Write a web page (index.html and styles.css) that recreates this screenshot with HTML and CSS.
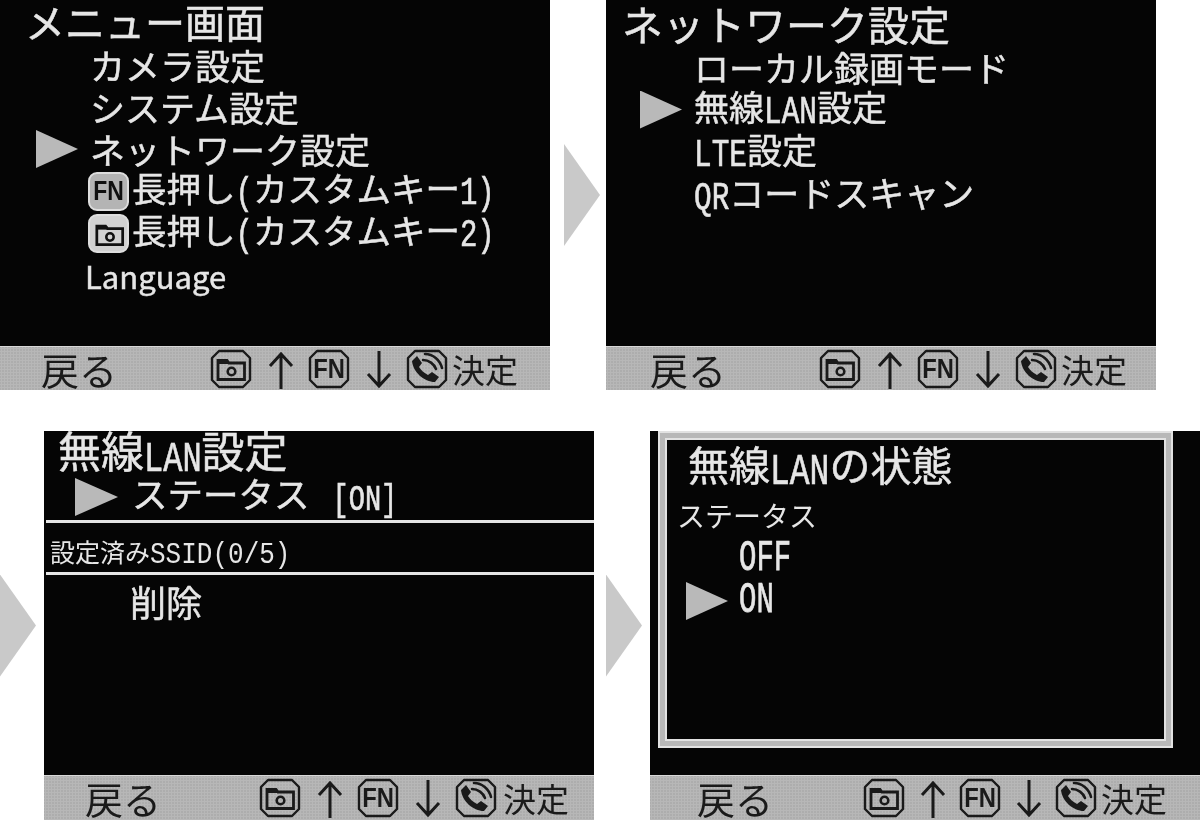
FILE: index.html
```html
<!DOCTYPE html>
<html lang="ja">
<head>
    <meta charset="utf-8">
    <title>無線LAN設定の手順</title>
    <link rel="stylesheet" href="styles.css">
</head>
<body>
    <svg class="defs" aria-hidden="true">
        <symbol id="cap" viewBox="0 0 42 40">
            <path d="M9 2H33L40 9V31L33 38H9L2 31V9Z" fill="none" stroke="currentColor" stroke-width="2.4" stroke-linejoin="round"/>
        </symbol>
        <symbol id="folder" viewBox="0 0 42 40">
            <path d="M8 11.5H17L19 14H34.5V30.5H8Z" fill="none" stroke="currentColor" stroke-width="2.8"/>
            <path d="M8 12H19V15H8Z" fill="currentColor"/>
            <circle cx="21.5" cy="22.5" r="3.8" fill="none" stroke="currentColor" stroke-width="2.6"/>
        </symbol>
        <symbol id="phone" viewBox="0 0 42 40">
            <path d="M6 12L11 7L16 14L13 18C15 21 18 24 22 26L26 23L33 28L29 33C18 33 7 23 6 12Z" fill="currentColor"/>
            <path d="M17 11C23 11 28 15 30 20M19 5C27 5 34 11 36 19" fill="none" stroke="currentColor" stroke-width="2.6" stroke-linecap="round"/>
        </symbol>
        <symbol id="up" viewBox="0 0 26 40">
            <path d="M13 40V6M2 17L13 5L24 17" fill="none" stroke="currentColor" stroke-width="3"/>
        </symbol>
        <symbol id="down" viewBox="0 0 26 40">
            <path d="M13 2V36M2 25L13 37L24 25" fill="none" stroke="currentColor" stroke-width="3"/>
        </symbol>
    </svg>

    <div class="stage">
        <div class="strip strip-top">
            <section class="screen screen-menu">
                <div class="content">
                    <h1 class="title">メニュー画面</h1>
                    <div class="row"><span class="pointer"></span><span>カメラ設定</span></div>
                    <div class="row"><span class="pointer"></span><span>システム設定</span></div>
                    <div class="row selected"><span class="pointer"></span><span>ネットワーク設定</span></div>
                    <div class="row row-key"><span class="pointer"></span><span class="solid-key"><span class="key-label">FN</span></span><span>長押し<span class="half">(</span>カスタムキー<span class="half">1)</span></span></div>
                    <div class="row row-key"><span class="pointer"></span><span class="solid-key solid-key-light"><svg class="icon"><use href="#folder"/></svg></span><span>長押し<span class="half">(</span>カスタムキー<span class="half">2)</span></span></div>
                    <div class="row row-lang"><span class="pointer"></span><span>Language</span></div>
                </div>
                <div class="bar">
                    <span class="back">戻る</span>
                    <span class="key"><svg class="icon"><use href="#cap"/></svg><svg class="icon"><use href="#folder"/></svg></span>
                    <svg class="dir"><use href="#up"/></svg>
                    <span class="key"><svg class="icon"><use href="#cap"/></svg><span class="key-label">FN</span></span>
                    <svg class="dir"><use href="#down"/></svg>
                    <span class="key"><svg class="icon"><use href="#cap"/></svg><svg class="icon"><use href="#phone"/></svg></span>
                    <span class="ok">決定</span>
                </div>
            </section>

            <div class="step"></div>

            <section class="screen screen-network">
                <div class="content">
                    <h1 class="title">ネットワーク設定</h1>
                    <div class="row"><span class="pointer"></span><span>ローカル録画モード</span></div>
                    <div class="row selected"><span class="pointer"></span><span>無線<span class="half">LAN</span>設定</span></div>
                    <div class="row"><span class="pointer"></span><span><span class="half">LTE</span>設定</span></div>
                    <div class="row"><span class="pointer"></span><span><span class="half">QR</span>コードスキャン</span></div>
                </div>
                <div class="bar">
                    <span class="back">戻る</span>
                    <span class="key"><svg class="icon"><use href="#cap"/></svg><svg class="icon"><use href="#folder"/></svg></span>
                    <svg class="dir"><use href="#up"/></svg>
                    <span class="key"><svg class="icon"><use href="#cap"/></svg><span class="key-label">FN</span></span>
                    <svg class="dir"><use href="#down"/></svg>
                    <span class="key"><svg class="icon"><use href="#cap"/></svg><svg class="icon"><use href="#phone"/></svg></span>
                    <span class="ok">決定</span>
                </div>
            </section>
        </div>

        <div class="strip strip-bottom">
            <div class="step"></div>

            <section class="screen screen-wlan">
                <div class="content">
                    <h1 class="title">無線<span class="half">LAN</span>設定</h1>
                    <div class="row selected"><span class="pointer"></span><span>ステータス<span class="half status">[ON]</span></span></div>
                    <hr class="rule">
                    <div class="saved">設定済み<span class="half">SSID(0/5)</span></div>
                    <hr class="rule">
                    <div class="row row-delete"><span>削除</span></div>
                </div>
                <div class="bar">
                    <span class="back">戻る</span>
                    <span class="key"><svg class="icon"><use href="#cap"/></svg><svg class="icon"><use href="#folder"/></svg></span>
                    <svg class="dir"><use href="#up"/></svg>
                    <span class="key"><svg class="icon"><use href="#cap"/></svg><span class="key-label">FN</span></span>
                    <svg class="dir"><use href="#down"/></svg>
                    <span class="key"><svg class="icon"><use href="#cap"/></svg><svg class="icon"><use href="#phone"/></svg></span>
                    <span class="ok">決定</span>
                </div>
            </section>

            <div class="step"></div>

            <section class="screen screen-status">
                <div class="content">
                    <div class="frame">
                        <h1 class="title">無線<span class="half">LAN</span>の状態</h1>
                        <div class="label">ステータス</div>
                        <div class="row"><span class="pointer"></span><span class="half">OFF</span></div>
                        <div class="row selected"><span class="pointer"></span><span class="half">ON</span></div>
                    </div>
                </div>
                <div class="bar">
                    <span class="back">戻る</span>
                    <span class="key"><svg class="icon"><use href="#cap"/></svg><svg class="icon"><use href="#folder"/></svg></span>
                    <svg class="dir"><use href="#up"/></svg>
                    <span class="key"><svg class="icon"><use href="#cap"/></svg><span class="key-label">FN</span></span>
                    <svg class="dir"><use href="#down"/></svg>
                    <span class="key"><svg class="icon"><use href="#cap"/></svg><svg class="icon"><use href="#phone"/></svg></span>
                    <span class="ok">決定</span>
                </div>
            </section>
        </div>
    </div>
</body>
</html>
```

FILE: styles.css
```css
body { margin: 0; background: #fff; font-family: "Noto Sans CJK JP", "Noto Sans", sans-serif; overflow: hidden; }
.defs { position: absolute; width: 0; height: 0; }

.stage { display: flex; flex-direction: column; gap: 41px; width: 1200px; height: 820px; }
.strip { display: flex; align-items: center; }
.strip-top { height: 390px; }
.strip-bottom { height: 389px; }
.step { flex: none; width: 36px; height: 102px; background: #c9c9c9; clip-path: polygon(0 0, 100% 50%, 0 100%); }
.strip-top .step { margin: 0 6px 0 14px; }
.strip-bottom .step { margin-right: 8px; }
.strip-bottom .screen + .step { margin-left: 12px; }

.screen { flex: none; display: flex; flex-direction: column; width: 550px; height: 100%; background: #050505; color: #e6e6e6; overflow: hidden; }
.content { flex: 1; min-height: 0; filter: blur(0.4px); }

.title { height: 44px; margin: 0; font-size: 40px; font-weight: 400; line-height: 42px; white-space: nowrap; -webkit-text-stroke: 0.5px #e6e6e6; }
.row { display: flex; align-items: center; gap: 12px; height: 42px; font-size: 35px; line-height: 42px; white-space: nowrap; -webkit-text-stroke: 0.5px #e6e6e6; }
.pointer { flex: none; width: 42px; height: 38px; }
.selected .pointer { background: #b9b9b9; clip-path: polygon(0 0, 100% 50%, 0 100%); }
/* half-width latin on the camera display: mono font stretched upward */
.half { display: inline-block; font-family: "Liberation Mono", monospace; font-size: 0.84em; transform: scaleY(1.35); }

.screen-menu .title { padding-left: 25px; }
.screen-menu .row { padding-left: 36px; }
.row-key { gap: 0; font-size: 34.5px; }
.row-key .pointer { margin-right: 10px; }
.row-lang { margin-top: 1px; font-size: 31px; }
.row-lang .pointer { margin-right: -5px; }
.solid-key { flex: none; position: relative; display: block; box-sizing: border-box; width: 41px; height: 39px; margin-right: 3px; background: #b4b4b4; border: 2px solid #dedede; border-radius: 9px; color: #111; -webkit-text-stroke: 0; }
.solid-key-light { background: #d2d2d2; }
.solid-key .icon { left: -1px; top: -1px; width: 41px; height: 39px; }

.screen-network .title { height: 45px; padding-left: 16px; font-size: 41px; line-height: 46px; }
.screen-network .row { height: 43px; padding-left: 34px; }

.screen-wlan .title { height: 36px; padding-left: 14px; font-size: 43px; line-height: 36px; margin-bottom: 9px; }
.screen-wlan .title .half { font-size: 32px; }
.screen-wlan .row.selected { padding-left: 31px; gap: 14px; font-size: 35.5px; }
.screen-wlan .selected .pointer { width: 43px; }
.status { margin-left: 23px; font-size: 27px; }
.rule { height: 3px; margin: 2px 0 0 2px; border: 0; background: #e6e6e6; }
.saved { height: 47px; padding-left: 6px; font-size: 25px; line-height: 56px; white-space: nowrap; }
.saved .half { font-size: 26px; transform: scaleY(1.1); }
.row-delete { margin-top: 5px; padding-left: 86px; font-size: 36px; }

.frame { box-sizing: border-box; width: 515px; height: 317px; margin-left: 8px; padding: 9px 0 0 17px; border: 2px solid #e2e2e2; box-shadow: inset 0 0 0 5px #b8b8b8, inset 0 0 0 7px #e2e2e2; }
.screen-status .title { height: 42px; padding-left: 11px; font-size: 41px; }
.screen-status .title .half { font-size: 33px; }
.label { margin-top: 9px; font-size: 28px; line-height: 45px; }
.screen-status .row { padding-left: 9px; gap: 11px; }
.screen-status .row .half { font-size: 29px; transform: scaleY(1.5); }

.bar { flex: none; display: flex; align-items: center; height: 43px; padding-left: 41px; background: #adadad radial-gradient(circle, rgba(255, 255, 255, 0.12) 0 1px, transparent 1.2px) 0 0 / 3px 3px; border-top: 1px solid #d8d8d8; color: #1a1a1a; overflow: hidden; filter: blur(0.3px); }
.back { flex: none; width: 169px; font-size: 38px; line-height: 40px; white-space: nowrap; }
.key { flex: none; position: relative; display: block; width: 42px; height: 40px; }
.icon { position: absolute; left: 0; top: 0; width: 42px; height: 40px; }
.key-label { position: absolute; left: 0; right: 0; top: 0; font: 700 28px/40px "Liberation Sans", sans-serif; text-align: center; transform: scaleX(0.85); }
.solid-key .key-label { top: -2px; left: -2px; right: -2px; line-height: 39px; font-size: 27px; color: #111; }
.dir { flex: none; width: 26px; height: 40px; margin: 0 14px 0 16px; }
.ok { margin-left: 4px; font-size: 33px; line-height: 40px; white-space: nowrap; }

.screen-network .bar { padding-left: 44px; }
.screen-network .back { width: 169px; }
.screen-wlan .back { width: 174px; }
.screen-wlan .ok { margin-left: 6px; }
.screen-wlan .bar, .screen-status .bar { height: 44px; }
.screen-status .bar { padding-left: 47px; }
.screen-status .back { width: 166px; }
.screen-status .dir { margin: 0 13px 0 15px; }
```
